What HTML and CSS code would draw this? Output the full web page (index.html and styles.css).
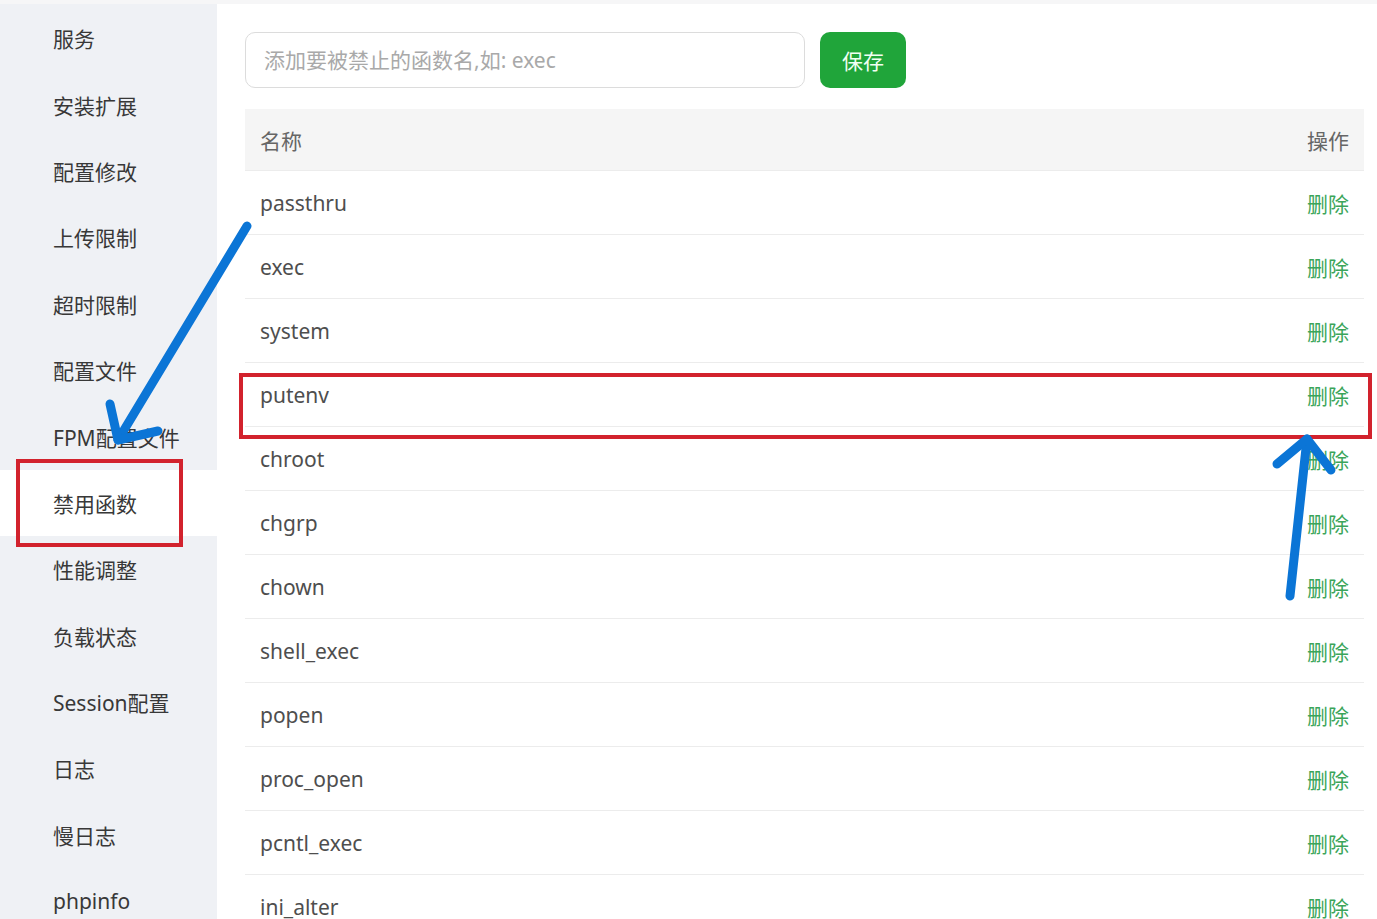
FILE: index.html
```html
<!DOCTYPE html>
<html lang="zh-CN">
<head>
<meta charset="utf-8">
<title>禁用函数</title>
<link rel="stylesheet" href="styles.css">
</head>
<body>
<div class="page">
  <aside class="sidebar">
    <div class="nav-item">服务</div>
    <div class="nav-item">安装扩展</div>
    <div class="nav-item">配置修改</div>
    <div class="nav-item">上传限制</div>
    <div class="nav-item">超时限制</div>
    <div class="nav-item">配置文件</div>
    <div class="nav-item">FPM配置文件</div>
    <div class="nav-item active">禁用函数</div>
    <div class="nav-item">性能调整</div>
    <div class="nav-item">负载状态</div>
    <div class="nav-item">Session配置</div>
    <div class="nav-item">日志</div>
    <div class="nav-item">慢日志</div>
    <div class="nav-item">phpinfo</div>
  </aside>
  <main class="content">
    <div class="toolbar">
      <input class="fn-input" type="text" placeholder="添加要被禁止的函数名,如: exec">
      <button class="btn-save">保存</button>
    </div>
    <div class="table">
      <div class="row head"><span>名称</span><span>操作</span></div>
      <div class="row"><span>passthru</span><a class="del">删除</a></div>
      <div class="row"><span>exec</span><a class="del">删除</a></div>
      <div class="row"><span>system</span><a class="del">删除</a></div>
      <div class="row"><span>putenv</span><a class="del">删除</a></div>
      <div class="row"><span>chroot</span><a class="del">删除</a></div>
      <div class="row"><span>chgrp</span><a class="del">删除</a></div>
      <div class="row"><span>chown</span><a class="del">删除</a></div>
      <div class="row"><span>shell_exec</span><a class="del">删除</a></div>
      <div class="row"><span>popen</span><a class="del">删除</a></div>
      <div class="row"><span>proc_open</span><a class="del">删除</a></div>
      <div class="row"><span>pcntl_exec</span><a class="del">删除</a></div>
      <div class="row"><span>ini_alter</span><a class="del">删除</a></div>
    </div>
  </main>
</div>
<svg class="annot" width="1377" height="919" viewBox="0 0 1377 919">
  <rect x="18" y="461" width="163" height="84" fill="none" stroke="#d2222d" stroke-width="4"/>
  <rect x="241" y="375" width="1129" height="62" fill="none" stroke="#d2222d" stroke-width="4"/>
  <g stroke="#0b75d6" stroke-width="9" stroke-linecap="round" stroke-linejoin="round" fill="none">
    <path d="M247 226 L118 440"/>
    <path d="M110 404 L118 440 L158 431"/>
    <path d="M1290 596 L1307 439"/>
    <path d="M1277 464 L1307 439 L1331 470"/>
  </g>
</svg>
</body>
</html>
```
FILE: styles.css
```css
* { box-sizing: border-box; }
html, body { margin: 0; padding: 0; }
body {
  font-family: "Noto Sans", "Noto Sans CJK SC", sans-serif;
  background: #fff;
  color: #333;
  overflow: hidden;
}
.page {
  display: flex;
  border-top: 4px solid #f6f6f7;
  min-height: 100vh;
}
.sidebar {
  width: 217px;
  flex: none;
  background: #eff1f5;
  padding-top: 1px;
}
.nav-item {
  height: 66.4px;
  display: flex;
  align-items: center;
  padding-left: 53px;
  font-size: 21px;
  color: #383838;
}
.nav-item.active { background: #fff; }
.content {
  flex: 1;
  padding: 28px 13px 0 28px;
}
.toolbar {
  display: flex;
  gap: 15px;
  height: 56px;
}
.fn-input {
  width: 560px;
  height: 56px;
  border: 1px solid #dcdcdc;
  border-radius: 10px;
  padding: 0 18px;
  font-family: inherit;
  font-size: 21px;
  color: #333;
  outline: none;
}
.fn-input::placeholder { color: #a9a9a9; }
.btn-save {
  width: 86px;
  height: 56px;
  border: none;
  border-radius: 10px;
  background: #20a53a;
  color: #f1fff3;
  font-family: inherit;
  font-size: 21px;
}
.table { margin-top: 21px; }
.row {
  display: flex;
  justify-content: space-between;
  align-items: center;
  height: 64px;
  padding: 0 15px;
  border-bottom: 1px solid #ececec;
  font-size: 21px;
  color: #4e4e4e;
}
.row.head {
  height: 62px;
  background: #f5f5f5;
  color: #666;
}
.del { color: #3ba55a; }
.annot {
  position: absolute;
  left: 0;
  top: 0;
  pointer-events: none;
}
```
